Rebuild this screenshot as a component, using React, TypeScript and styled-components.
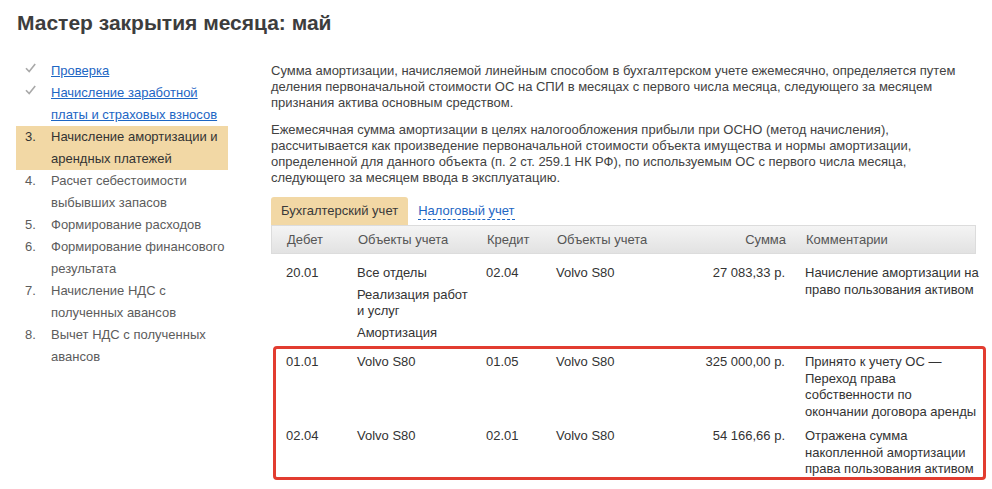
import React from "react";
import styled, { createGlobalStyle } from "styled-components";

const GlobalStyle = createGlobalStyle`
  html, body { margin: 0; padding: 0; background: #fff; }
  body {
    font-family: "Liberation Sans", Arial, sans-serif;
    font-size: 13px;
    color: #404040;
  }
`;

const Page = styled.div`
  padding: 10px 16px 0 16px;
`;

const Title = styled.h1`
  margin: 0 0 0 1px;
  font-size: 21px;
  line-height: 25px;
  font-weight: bold;
  color: #3d3d3d;
`;

const Body = styled.div`
  display: flex;
  gap: 43px;
  margin-top: 25px;
`;

const Sidebar = styled.ol`
  list-style: none;
  margin: 0;
  padding: 0;
  width: 212px;
  flex: none;
`;

const Step = styled.li<{ $active?: boolean }>`
  display: flex;
  padding: 0 2px 0 9px;
  line-height: 22px;
  background: ${(p) => (p.$active ? "#f2d8a5" : "transparent")};
  color: ${(p) => (p.$active ? "#333" : "#5c5c5c")};
`;

const Marker = styled.span`
  width: 26px;
  flex: none;
  display: flex;
  align-items: flex-start;
`;

const CheckBox = styled.span`
  display: inline-flex;
  height: 22px;
  align-items: center;
  margin-top: -3px;
`;

const StepText = styled.span`
  flex: 1;
`;

const StepLink = styled.a`
  color: #1d66c4;
  text-decoration: underline;
  cursor: pointer;
`;

const Content = styled.div`
  width: 705px;
  flex: none;
  padding-top: 3px;
`;

const Para = styled.p`
  margin: 0 0 11px 0;
  line-height: 16px;
  color: #424242;
`;

const Tabs = styled.div`
  display: flex;
  align-items: center;
  margin-top: 11px;
`;

const ActiveTab = styled.div`
  background: #f2d8a5;
  border-radius: 3px 3px 0 0;
  padding: 6px 10px 6px 10px;
  line-height: 16px;
  color: #3a3a3a;
`;

const TabLink = styled.a`
  margin-left: 10px;
  color: #1d66c4;
  line-height: 16px;
  text-decoration: none;
  border-bottom: 1px dashed #1d66c4;
  cursor: pointer;
`;

const Grid = styled.div`
  display: grid;
  grid-template-columns: 71px 129px 70px 104px 125px 191px;
  padding-left: 15px;
`;

const HeaderRow = styled(Grid)`
  height: 27px;
  align-items: center;
  border: 1px solid #dcdcdc;
  background: linear-gradient(#f4f4f4, #e2e2e2);
  color: #555;
`;

const HeadCell = styled.div<{ $right?: boolean; $pad?: boolean }>`
  text-align: ${(p) => (p.$right ? "right" : "left")};
  padding-left: ${(p) => (p.$pad ? "20px" : "0")};
`;

const TableBody = styled.div`
  padding-top: 5px;
`;

const Row = styled(Grid)`
  padding-top: 6px;
  padding-bottom: 2px;
  line-height: 16.5px;
  color: #333;
`;

const Cell = styled.div<{ $right?: boolean; $pad?: boolean; $narrow?: boolean }>`
  text-align: ${(p) => (p.$right ? "right" : "left")};
  padding-left: ${(p) => (p.$pad ? "20px" : "0")};
  padding-right: ${(p) => (p.$narrow ? "14px" : "0")};
`;

const CommentLine = styled.div`
  white-space: nowrap;
`;

const ObjectItem = styled.div`
  margin-bottom: 5px;
`;

const Highlighted = styled.div`
  position: relative;
  &::after {
    content: "";
    position: absolute;
    left: 2px;
    right: -10px;
    top: -2px;
    bottom: 0;
    border: 3px solid #e23c30;
    border-radius: 4px;
    pointer-events: none;
  }
`;

const Check = () => (
  <svg width="11" height="10" viewBox="0 0 11 10">
    <polyline
      points="1,5.2 4.2,8.6 10.2,1"
      fill="none"
      stroke="#a9a9a9"
      strokeWidth="1.6"
    />
  </svg>
);

type Entry = {
  debit: string;
  debitObjects: string[];
  credit: string;
  creditObjects: string[];
  sum: string;
  comment: string[];
};

const entries: Entry[] = [
  {
    debit: "20.01",
    debitObjects: ["Все отделы", "Реализация работ и услуг", "Амортизация"],
    credit: "02.04",
    creditObjects: ["Volvo S80"],
    sum: "27 083,33 р.",
    comment: ["Начисление амортизации на", "право пользования активом"],
  },
  {
    debit: "01.01",
    debitObjects: ["Volvo S80"],
    credit: "01.05",
    creditObjects: ["Volvo S80"],
    sum: "325 000,00 р.",
    comment: [
      "Принято к учету ОС —",
      "Переход права",
      "собственности по",
      "окончании договора аренды",
    ],
  },
  {
    debit: "02.04",
    debitObjects: ["Volvo S80"],
    credit: "02.01",
    creditObjects: ["Volvo S80"],
    sum: "54 166,66 р.",
    comment: ["Отражена сумма", "накопленной амортизации", "права пользования активом"],
  },
];

const EntryRow = ({ e }: { e: Entry }) => (
  <Row>
    <Cell>{e.debit}</Cell>
    <Cell $narrow>
      {e.debitObjects.map((o) => (
        <ObjectItem key={o}>{o}</ObjectItem>
      ))}
    </Cell>
    <Cell>{e.credit}</Cell>
    <Cell>
      {e.creditObjects.map((o) => (
        <ObjectItem key={o}>{o}</ObjectItem>
      ))}
    </Cell>
    <Cell $right>{e.sum}</Cell>
    <Cell $pad>
      {e.comment.map((l) => (
        <CommentLine key={l}>{l}</CommentLine>
      ))}
    </Cell>
  </Row>
);

const steps = [
  { n: "3.", text: "Начисление амортизации и арендных платежей", active: true },
  { n: "4.", text: "Расчет себестоимости выбывших запасов" },
  { n: "5.", text: "Формирование расходов" },
  { n: "6.", text: "Формирование финансового результата" },
  { n: "7.", text: "Начисление НДС с полученных авансов" },
  { n: "8.", text: "Вычет НДС с полученных авансов" },
];

export default function App() {
  return (
    <Page>
      <GlobalStyle />
      <Title>Мастер закрытия месяца: май</Title>
      <Body>
        <Sidebar>
          <Step>
            <Marker>
              <CheckBox>
                <Check />
              </CheckBox>
            </Marker>
            <StepText>
              <StepLink>Проверка</StepLink>
            </StepText>
          </Step>
          <Step>
            <Marker>
              <CheckBox>
                <Check />
              </CheckBox>
            </Marker>
            <StepText>
              <StepLink>Начисление заработной платы и страховых взносов</StepLink>
            </StepText>
          </Step>
          {steps.map((s) => (
            <Step key={s.n} $active={s.active}>
              <Marker>{s.n}</Marker>
              <StepText>{s.text}</StepText>
            </Step>
          ))}
        </Sidebar>
        <Content>
          <Para>
            Сумма амортизации, начисляемой линейным способом в бухгалтерском учете ежемесячно,
            определяется путем деления первоначальной стоимости ОС на СПИ в месяцах с первого
            числа месяца, следующего за месяцем признания актива основным средством.
          </Para>
          <Para>
            Ежемесячная сумма амортизации в целях налогообложения прибыли при ОСНО (метод
            начисления), рассчитывается как произведение первоначальной стоимости объекта
            имущества и нормы амортизации, определенной для данного объекта (п. 2 ст. 259.1 НК
            РФ), по используемым ОС с первого числа месяца, следующего за месяцем ввода в
            эксплуатацию.
          </Para>
          <Tabs>
            <ActiveTab>Бухгалтерский учет</ActiveTab>
            <TabLink>Налоговый учет</TabLink>
          </Tabs>
          <HeaderRow>
            <HeadCell>Дебет</HeadCell>
            <HeadCell>Объекты учета</HeadCell>
            <HeadCell>Кредит</HeadCell>
            <HeadCell>Объекты учета</HeadCell>
            <HeadCell $right>Сумма</HeadCell>
            <HeadCell $pad>Комментарии</HeadCell>
          </HeaderRow>
          <TableBody>
            <EntryRow e={entries[0]} />
            <Highlighted>
              <EntryRow e={entries[1]} />
              <EntryRow e={entries[2]} />
            </Highlighted>
          </TableBody>
        </Content>
      </Body>
    </Page>
  );
}
